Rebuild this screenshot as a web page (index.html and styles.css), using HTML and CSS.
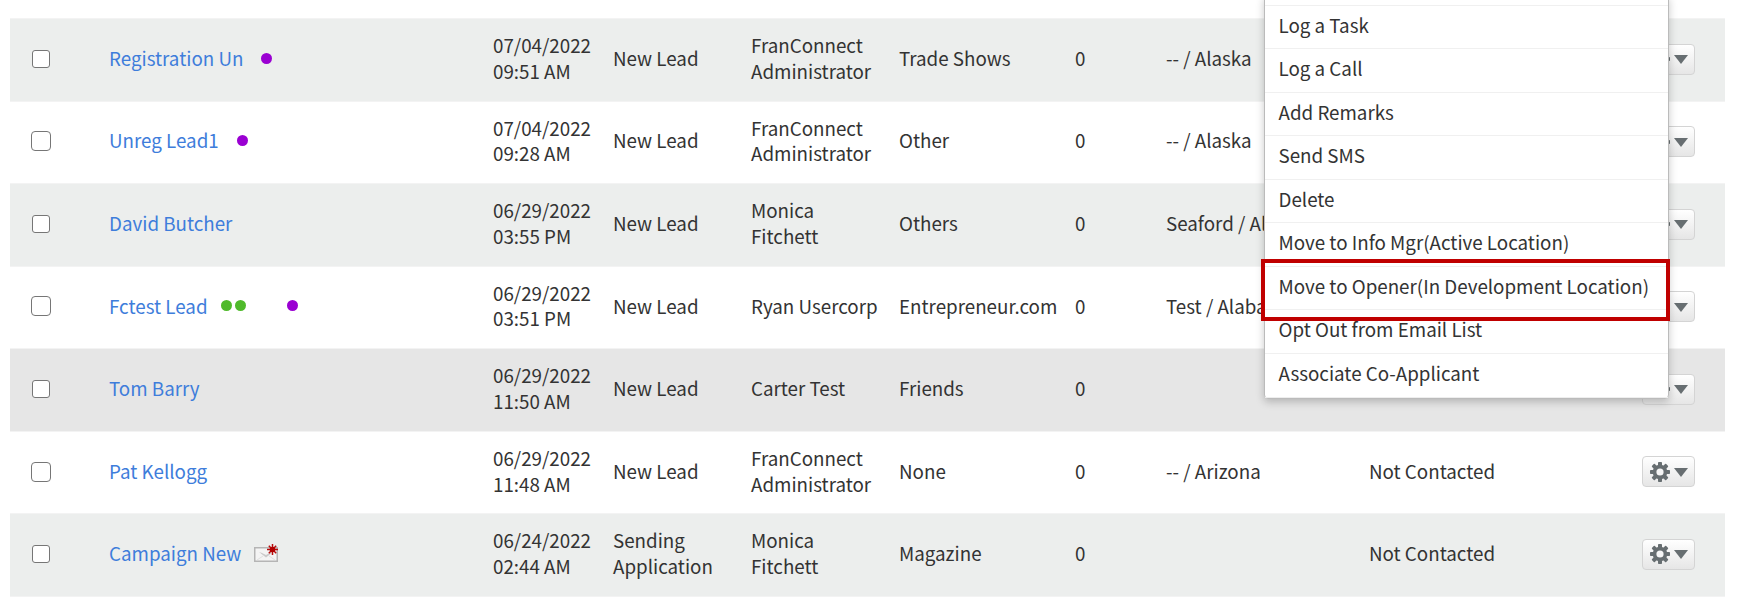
FILE: index.html
```html
<!DOCTYPE html>
<html lang="en">
<head>
<meta charset="utf-8">
<title>Leads</title>
<link rel="stylesheet" href="styles.css">
</head>
<body>
<svg width="0" height="0" class="defs">
  <symbol id="gear" viewBox="0 0 20 20">
    <g fill="#676e71">
      <circle cx="10" cy="10" r="7.3"/>
      <g id="teeth"><rect x="8" y="0" width="4" height="20" rx=".8"/><rect x="0" y="8" width="20" height="4" rx=".8"/></g>
      <use href="#teeth" transform="rotate(45 10 10)"/>
    </g>
    <circle cx="10" cy="10" r="3.6" fill="#f5f5f5"/>
  </symbol>
  <symbol id="caret" viewBox="0 0 14 9"><path d="M0 0h14L7 9z" fill="#676e71"/></symbol>
</svg>
<main class="leads">
  <div class="row odd">
    <div class="pick"><span class="box"></span></div>
    <div class="name"><a>Registration Un</a><i class="dot purple"></i></div>
    <div>07/04/2022<br>09:51 AM</div><div>New Lead</div><div>FranConnect<br>Administrator</div><div>Trade Shows</div><div>0</div><div>-- / Alaska</div><div></div>
    <div class="tools"><span class="action"><svg class="gear"><use href="#gear"/></svg><svg class="caret"><use href="#caret"/></svg></span></div>
  </div>
  <div class="row">
    <div class="pick"><span class="box large"></span></div>
    <div class="name"><a>Unreg Lead1</a><i class="dot purple"></i></div>
    <div>07/04/2022<br>09:28 AM</div><div>New Lead</div><div>FranConnect<br>Administrator</div><div>Other</div><div>0</div><div>-- / Alaska</div><div></div>
    <div class="tools"><span class="action"><svg class="gear"><use href="#gear"/></svg><svg class="caret"><use href="#caret"/></svg></span></div>
  </div>
  <div class="row odd">
    <div class="pick"><span class="box"></span></div>
    <div class="name"><a>David Butcher</a></div>
    <div>06/29/2022<br>03:55 PM</div><div>New Lead</div><div>Monica<br>Fitchett</div><div>Others</div><div>0</div><div class="place">Seaford / Alabama</div><div></div>
    <div class="tools"><span class="action"><svg class="gear"><use href="#gear"/></svg><svg class="caret"><use href="#caret"/></svg></span></div>
  </div>
  <div class="row">
    <div class="pick"><span class="box large"></span></div>
    <div class="name"><a>Fctest Lead</a><i class="dot green"></i><i class="dot green second"></i><i class="dot purple far"></i></div>
    <div>06/29/2022<br>03:51 PM</div><div>New Lead</div><div>Ryan Usercorp</div><div>Entrepreneur.com</div><div>0</div><div class="place">Test / Alabama</div><div></div>
    <div class="tools"><span class="action"><svg class="gear"><use href="#gear"/></svg><svg class="caret"><use href="#caret"/></svg></span></div>
  </div>
  <div class="row hover">
    <div class="pick"><span class="box"></span></div>
    <div class="name"><a>Tom Barry</a></div>
    <div>06/29/2022<br>11:50 AM</div><div>New Lead</div><div>Carter Test</div><div>Friends</div><div>0</div><div></div><div></div>
    <div class="tools"><span class="action"><svg class="gear"><use href="#gear"/></svg><svg class="caret"><use href="#caret"/></svg></span></div>
  </div>
  <div class="row">
    <div class="pick"><span class="box large"></span></div>
    <div class="name"><a>Pat Kellogg</a></div>
    <div>06/29/2022<br>11:48 AM</div><div>New Lead</div><div>FranConnect<br>Administrator</div><div>None</div><div>0</div><div>-- / Arizona</div><div>Not Contacted</div>
    <div class="tools"><span class="action"><svg class="gear"><use href="#gear"/></svg><svg class="caret"><use href="#caret"/></svg></span></div>
  </div>
  <div class="row odd">
    <div class="pick"><span class="box"></span></div>
    <div class="name"><a>Campaign New</a>
      <svg class="mail" viewBox="0 0 24 18">
        <rect x=".75" y="3.75" width="22.5" height="13.5" fill="#f4f4f4" stroke="#b5b5b5" stroke-width="1.5"/>
        <path d="M5 8l7 5.500 7-5.500-3.500 1-3.500 2-4-2z" fill="#cacaca"/>
        <path d="M3 16l6-4M21 16l-6-4" stroke="#e0e0e0" fill="none"/>
        <path d="M18.500 0v11M13 5.500h11M14.800 1.800l7.400 7.400M22.200 1.800l-7.400 7.400" stroke="#b80b0b" stroke-width="1.500"/>
        <circle cx="18.500" cy="5.500" r="2.800" fill="#b00000"/>
      </svg></div>
    <div>06/24/2022<br>02:44 AM</div><div>Sending<br>Application</div><div>Monica<br>Fitchett</div><div>Magazine</div><div>0</div><div></div><div>Not Contacted</div>
    <div class="tools"><span class="action"><svg class="gear"><use href="#gear"/></svg><svg class="caret"><use href="#caret"/></svg></span></div>
  </div>
</main>
<ul class="menu">
  <li>Log a Task</li>
  <li>Log a Call</li>
  <li>Add Remarks</li>
  <li>Send SMS</li>
  <li>Delete</li>
  <li>Move to Info Mgr(Active Location)</li>
  <li>Move to Opener(In Development Location)</li>
  <li>Opt Out from Email List</li>
  <li>Associate Co-Applicant</li>
</ul>
<div class="highlight"></div>
</body>
</html>
```
FILE: styles.css
```css
* { box-sizing: border-box; }
body {
  margin: 0;
  height: 613px;
  overflow: hidden;
  position: relative;
  background: #fff;
  color: #333;
  font: 18.77px/25.8px "Noto Sans CJK JP", "Noto Sans", sans-serif;
}
.defs { position: absolute; }
.leads { width: 1715px; margin-left: 10px; padding-top: 18px; }
.row {
  display: grid;
  grid-template-columns: 99px 384px 120px 138px 148px 176px 91px 203px 273px 83px;
  align-items: center;
  height: 82.57px;
  border-top: 1px solid #f3f3f3;
  white-space: nowrap;
}
.row > div { padding-bottom: 4px; }
.row:last-child { height: 83.5px; border-bottom: 1px solid #f3f3f3; }
.odd { background: #eceeed; }
.hover { background: #e6e6e6; }
.row > .pick { padding: 0 0 2px 20px; display: flex; width: 42px; justify-content: center; }
.row > .tools { padding-bottom: 1.5px; }
.box {
  flex: none;
  width: 18px;
  height: 18px;
  border: 1.4px solid #767676;
  border-radius: 3px;
  background: #fff;
}
.box.large { width: 20px; height: 20px; border-radius: 4px; }
.name { display: flex; align-items: center; color: #3e7ddb; }
.place { width: 98px; overflow: hidden; }
.dot { width: 11px; height: 11px; border-radius: 50%; margin-top: 1px; }
.purple { background: #9a00d2; margin-left: 18px; }
.green { background: #4fba2b; margin-left: 13px; }
.second { margin-left: 3px; }
.far { margin-left: 41px; }
.mail { width: 24px; height: 18px; margin-left: 13px; margin-top: -1px; }
.action {
  display: flex;
  align-items: center;
  width: 53px;
  height: 31px;
  padding-left: 7px;
  border: 1px solid #d4d4d4;
  border-radius: 4px;
  background: linear-gradient(#fff, #e6e6e6);
}
.gear { width: 20px; height: 20px; }
.caret { width: 14px; height: 9px; margin-left: 4px; margin-top: 1px; }
.menu {
  position: absolute;
  left: 1264px;
  top: -5px;
  width: 405px;
  margin: 0;
  padding: 9px 0 0;
  list-style: none;
  background: #fff;
  border: 1px solid #bbb;
  border-radius: 4px;
  box-shadow: 0 3px 8px rgba(0, 0, 0, .22);
}
.menu li {
  height: 43.45px;
  padding: 6px 13.500px 0;
  border-top: 1px solid #f0f0f0;
  white-space: nowrap;
}
.menu li:last-child { height: 45px; border-bottom: 1px solid #eee; }
.highlight {
  position: absolute;
  left: 1261px;
  top: 259px;
  width: 409px;
  height: 62px;
  border: 4px solid #c00000;
}
```
